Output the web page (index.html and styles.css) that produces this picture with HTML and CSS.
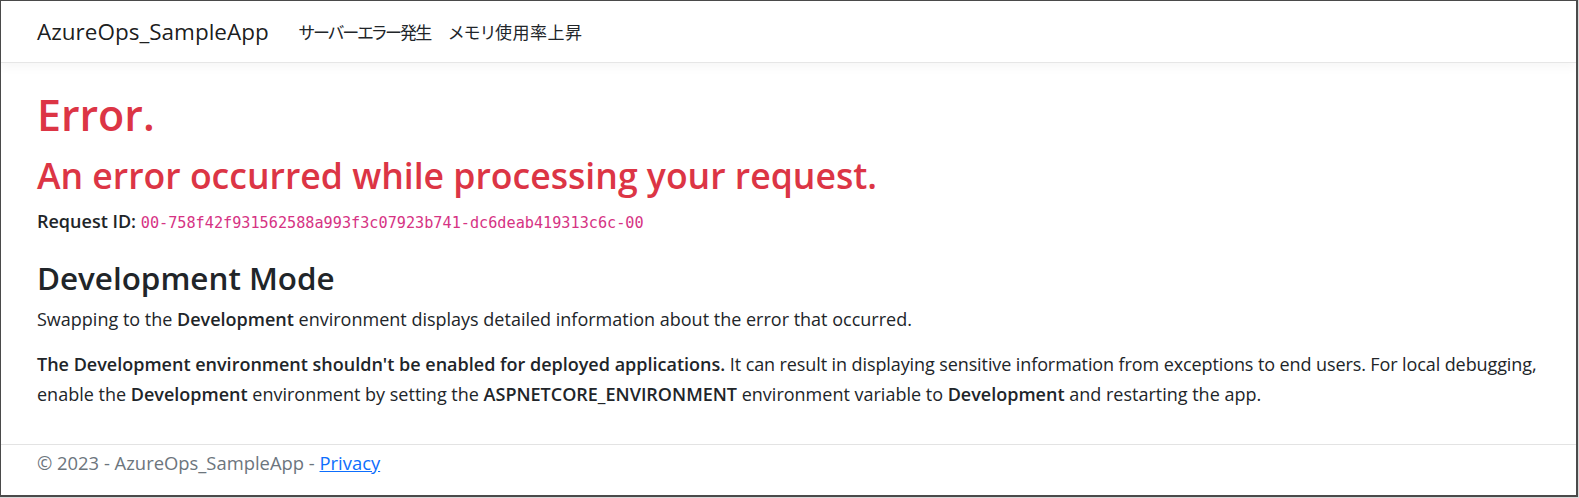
FILE: index.html
```html
<!DOCTYPE html>
<html lang="ja">
<head>
<meta charset="utf-8">
<title>Error - AzureOps_SampleApp</title>
<link rel="stylesheet" href="styles.css">
</head>
<body>
<div class="frame">
  <header class="navbar">
    <a class="brand" href="#">AzureOps_SampleApp</a>
    <ul class="nav">
      <li><a class="nav-link nav-link-tight" href="#">サーバーエラー発生</a></li>
      <li><a class="nav-link nav-link-wide" href="#">メモリ使用率上昇</a></li>
    </ul>
  </header>
  <main class="main">
    <h1 class="title">Error.</h1>
    <h2 class="subtitle">An error occurred while processing your request.</h2>
    <p class="request"><strong>Request ID:</strong> <code class="code">00-758f42f931562588a993f3c07923b741-dc6deab419313c6c-00</code></p>
    <h3 class="section">Development Mode</h3>
    <p class="para first">Swapping to the <strong>Development</strong> environment displays detailed information about the error that occurred.</p>
    <p class="para second"><strong>The Development environment shouldn't be enabled for deployed applications.</strong> <span class="tight">It can result in displaying sensitive information from exceptions to end users. For local debugging,</span> enable the <strong>Development</strong> environment by setting the <strong>ASPNETCORE_ENVIRONMENT</strong> environment variable to <strong>Development</strong> and restarting the app.</p>
  </main>
  <footer class="footer">&copy; 2023 - AzureOps_SampleApp - <a class="footer-link" href="#">Privacy</a></footer>
</div>
</body>
</html>
```
FILE: styles.css
```css
html {
  background: #d8d8d8;
}
body {
  margin: 0;
  font-family: "Open Sans", "Noto Sans", sans-serif;
  color: #212529;
}
.frame {
  box-sizing: border-box;
  width: 1578px;
  height: 497px;
  border: 1px solid #4a4a4a;
  border-right-width: 2px;
  border-bottom-width: 2px;
  background: #fff;
  overflow: hidden;
  display: flex;
  flex-direction: column;
}
.navbar {
  height: 61px;
  border-bottom: 1px solid #e6e6e6;
  box-shadow: 0 4px 10px rgba(0, 0, 0, 0.04);
  display: flex;
  align-items: center;
  padding-left: 36px;
  flex-shrink: 0;
}
.brand {
  font-size: 22.5px;
  line-height: 1.5;
  color: rgba(0, 0, 0, 0.9);
  text-decoration: none;
}
.nav {
  list-style: none;
  margin: 0 0 0 30px;
  padding: 0;
  display: flex;
  gap: 18px;
}
.nav-link {
  font-family: "Noto Sans CJK JP", sans-serif;
  font-feature-settings: "palt";
  font-size: 17px;
  line-height: 1.5;
  color: #212529;
  text-decoration: none;
}
.nav-link-tight {
  letter-spacing: -1.7px;
}
.nav-link-wide {
  letter-spacing: 0.5px;
}
.main {
  padding: 25px 12px 0 36px;
  flex: 1;
}
.title {
  margin: 0 0 11px;
  font-size: 43px;
  line-height: 54px;
  font-weight: 600;
  color: #dc3545;
}
.subtitle {
  margin: 0 0 10px;
  font-size: 35.6px;
  line-height: 44px;
  font-weight: 600;
  color: #dc3545;
}
.request {
  margin: 0 0 21px;
  font-size: 18px;
  line-height: 29px;
}
.request strong {
  font-weight: 600;
}
.code {
  font-family: "DejaVu Sans Mono", "Liberation Mono", monospace;
  font-size: 15.2px;
  color: #d63384;
}
.section {
  margin: 0 0 7px;
  font-size: 31.4px;
  line-height: 38px;
  font-weight: 600;
}
.para {
  margin: 0;
  font-size: 18px;
  line-height: 30px;
}
.para strong {
  font-weight: 600;
}
.para.first {
  margin-bottom: 15px;
}
.tight {
  letter-spacing: -0.1px;
}
.footer {
  border-top: 1px solid #e3e3e3;
  padding: 3px 36px 0;
  height: 47px;
  font-size: 18.4px;
  line-height: 30px;
  color: #6c757d;
}
.footer-link {
  color: #0d6efd;
}
```
